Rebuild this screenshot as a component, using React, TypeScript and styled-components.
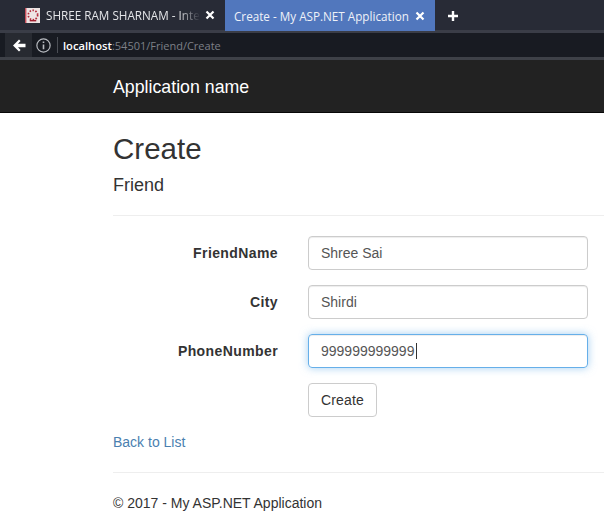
import { createGlobalStyle } from 'styled-components';
import styled from 'styled-components';

const fields = [
  { label: 'FriendName', value: 'Shree Sai', focused: false },
  { label: 'City', value: 'Shirdi', focused: false },
  { label: 'PhoneNumber', value: '999999999999', focused: true },
];

export default function App() {
  return (
    <>
      <GlobalStyle />
      <TabStrip>
        <Tab>
          <Favicon viewBox="0 0 16 16">
            <rect width="16" height="16" fill="#eee4e4" />
            <path d="M0 0h1.5v16H0z" fill="#c8505c" />
            <circle cx="8.5" cy="7.5" r="5" fill="none" stroke="#b22a3a" strokeWidth="1.8" strokeDasharray="1.6 1.6" />
            <path d="M5 13.5h7" stroke="#a01f30" strokeWidth="1.6" />
          </Favicon>
          <TabTitle>SHREE RAM SHARNAM - Inte</TabTitle>
          <CloseIcon viewBox="0 0 10 10">
            <path d="M1.5 1.5 8.5 8.5M8.5 1.5 1.5 8.5" />
          </CloseIcon>
        </Tab>
        <ActiveTab>
          <ActiveTitle>Create - My ASP.NET Application</ActiveTitle>
          <CloseIcon viewBox="0 0 10 10">
            <path d="M1.5 1.5 8.5 8.5M8.5 1.5 1.5 8.5" />
          </CloseIcon>
        </ActiveTab>
        <PlusIcon viewBox="0 0 12 12">
          <path d="M6 1v10M1 6h10" />
        </PlusIcon>
      </TabStrip>
      <UrlBar>
        <BackButton>
          <svg width="14" height="13" viewBox="0 0 14 13">
            <path d="M7 .5 1 6.5l6 6 1.6-1.6L6 8.2h7.5V4.8H6l2.6-2.7z" fill="#fff" />
          </svg>
        </BackButton>
        <AddressField>
          <InfoIcon viewBox="0 0 14 14">
            <circle cx="7" cy="7" r="6.2" fill="none" stroke="#b8bbc0" strokeWidth="1.1" />
            <path d="M7 6v4.4M7 3.3v1.4" stroke="#b8bbc0" strokeWidth="1.5" />
          </InfoIcon>
          <Separator />
          <Host>localhost</Host>
          <UrlRest>:54501/Friend/Create</UrlRest>
        </AddressField>
      </UrlBar>
      <Navbar>
        <Brand>Application name</Brand>
      </Navbar>
      <Page>
        <Title>Create</Title>
        <Subtitle>Friend</Subtitle>
        <Rule />
        <Form>
          {fields.map((field) => (
            <Row key={field.label}>
              <Label>{field.label}</Label>
              <Input $focused={field.focused}>
                {field.value}
                {field.focused && <Caret />}
              </Input>
            </Row>
          ))}
          <Row>
            <Label />
            <Button>Create</Button>
          </Row>
        </Form>
        <BackLink href="#">Back to List</BackLink>
        <FooterRule />
        <Footer>© 2017 - My ASP.NET Application</Footer>
      </Page>
    </>
  );
}

const GlobalStyle = createGlobalStyle`
  html, body {
    margin: 0;
    padding: 0;
    background: #fff;
    overflow: hidden;
  }
  body {
    width: 604px;
    height: 520px;
    font-family: "Liberation Sans", Arial, sans-serif;
    font-size: 14px;
    color: #333;
  }
`;

const TabStrip = styled.div`
  display: flex;
  align-items: stretch;
  height: 30px;
  background: #282b36;
  border-bottom: 3px solid #3a3d47;
`;

const Tab = styled.div`
  display: flex;
  align-items: center;
  width: 225px;
  padding-left: 25px;
  box-sizing: border-box;
  font-family: "Open Sans", sans-serif;
  font-size: 11.7px;
  color: #e4e5e8;
`;

const Favicon = styled.svg`
  width: 15px;
  height: 15px;
  flex: none;
`;

const TabTitle = styled.span`
  width: 159px;
  margin-left: 6px;
  white-space: nowrap;
  -webkit-mask-image: linear-gradient(to right, #000 83%, transparent 97%);
  mask-image: linear-gradient(to right, #000 83%, transparent 97%);
`;

const ActiveTab = styled.div`
  display: flex;
  align-items: center;
  width: 210px;
  margin-bottom: -1px;
  padding-left: 9px;
  box-sizing: border-box;
  background: #5177bd;
  font-family: "Open Sans", sans-serif;
  font-size: 11.7px;
  color: #eef1f8;
`;

const ActiveTitle = styled.span`
  width: 181px;
  white-space: nowrap;
`;

const CloseIcon = styled.svg`
  width: 10px;
  height: 10px;
  flex: none;
  fill: none;
  stroke: #fff;
  stroke-width: 2.2;
`;

const PlusIcon = styled.svg`
  width: 12px;
  height: 12px;
  margin: 10px 0 0 12px;
  fill: none;
  stroke: #fff;
  stroke-width: 2.4;
`;

const UrlBar = styled.div`
  display: flex;
  align-items: stretch;
  height: 24px;
  padding-left: 5px;
  background: #181b22;
  border-bottom: 3px solid #3e4148;
`;

const BackButton = styled.div`
  display: flex;
  align-items: center;
  justify-content: center;
  width: 27px;
  background: #272a31;
`;

const AddressField = styled.div`
  display: flex;
  align-items: center;
  flex: 1;
  font-family: "Open Sans", sans-serif;
  font-size: 11.2px;
`;

const InfoIcon = styled.svg`
  width: 15px;
  height: 15px;
  margin-left: 4px;
`;

const Separator = styled.div`
  width: 1px;
  height: 16px;
  margin: 0 5px 0 6px;
  background: #4b4e55;
`;

const Host = styled.span`
  color: #fff;
  font-weight: 600;
`;

const UrlRest = styled.span`
  font-size: 11px;
  color: #7d8087;
`;

const Navbar = styled.div`
  display: flex;
  align-items: center;
  height: 50px;
  padding: 2px 0 0 113px;
  background: #222;
  border-bottom: 1px solid #080808;
`;

const Brand = styled.div`
  font-size: 17.75px;
  color: #fff;
`;

const Page = styled.div`
  padding-left: 113px;
`;

const Title = styled.h1`
  margin: 19px 0 0;
  font-size: 29.5px;
  font-weight: 400;
  line-height: 33px;
  color: #333;
`;

const Subtitle = styled.h4`
  margin: 10px 0 0;
  font-size: 18px;
  font-weight: 400;
  line-height: 20px;
  color: #333;
`;

const Rule = styled.hr`
  height: 1px;
  margin: 20px 0 0;
  border: 0;
  background: #eee;
`;

const Form = styled.div`
  display: flex;
  flex-direction: column;
  gap: 15px;
  margin-top: 20px;
`;

const Row = styled.div`
  display: flex;
  align-items: center;
  height: 34px;
`;

const Label = styled.label`
  width: 165px;
  flex: none;
  font-weight: 700;
  text-align: right;
  letter-spacing: 0.4px;
`;

const Input = styled.div<{ $focused: boolean }>`
  display: flex;
  align-items: center;
  width: 280px;
  height: 34px;
  margin-left: 30px;
  padding: 0 12px;
  box-sizing: border-box;
  border: 1px solid ${(p) => (p.$focused ? '#66afe9' : '#ccc')};
  border-radius: 4px;
  color: #555;
  box-shadow: ${(p) =>
    p.$focused
      ? 'inset 0 1px 1px rgba(0, 0, 0, 0.075), 0 0 8px rgba(102, 175, 233, 0.6)'
      : 'inset 0 1px 1px rgba(0, 0, 0, 0.075)'};
`;

const Caret = styled.span`
  width: 1px;
  height: 16px;
  margin-left: 2px;
  background: #333;
`;

const Button = styled.div`
  display: flex;
  align-items: center;
  height: 34px;
  margin-left: 30px;
  padding: 0 12px;
  box-sizing: border-box;
  border: 1px solid #ccc;
  border-radius: 4px;
  background: #fff;
  color: #333;
  letter-spacing: 0.15px;
`;

const BackLink = styled.a`
  display: block;
  margin-top: 15px;
  line-height: 20px;
  color: #4a7fb0;
  text-decoration: none;
`;

const FooterRule = styled.hr`
  height: 1px;
  margin: 20px 0 0;
  border: 0;
  background: #eee;
`;

const Footer = styled.p`
  margin: 20px 0 0;
  line-height: 20px;
`;
